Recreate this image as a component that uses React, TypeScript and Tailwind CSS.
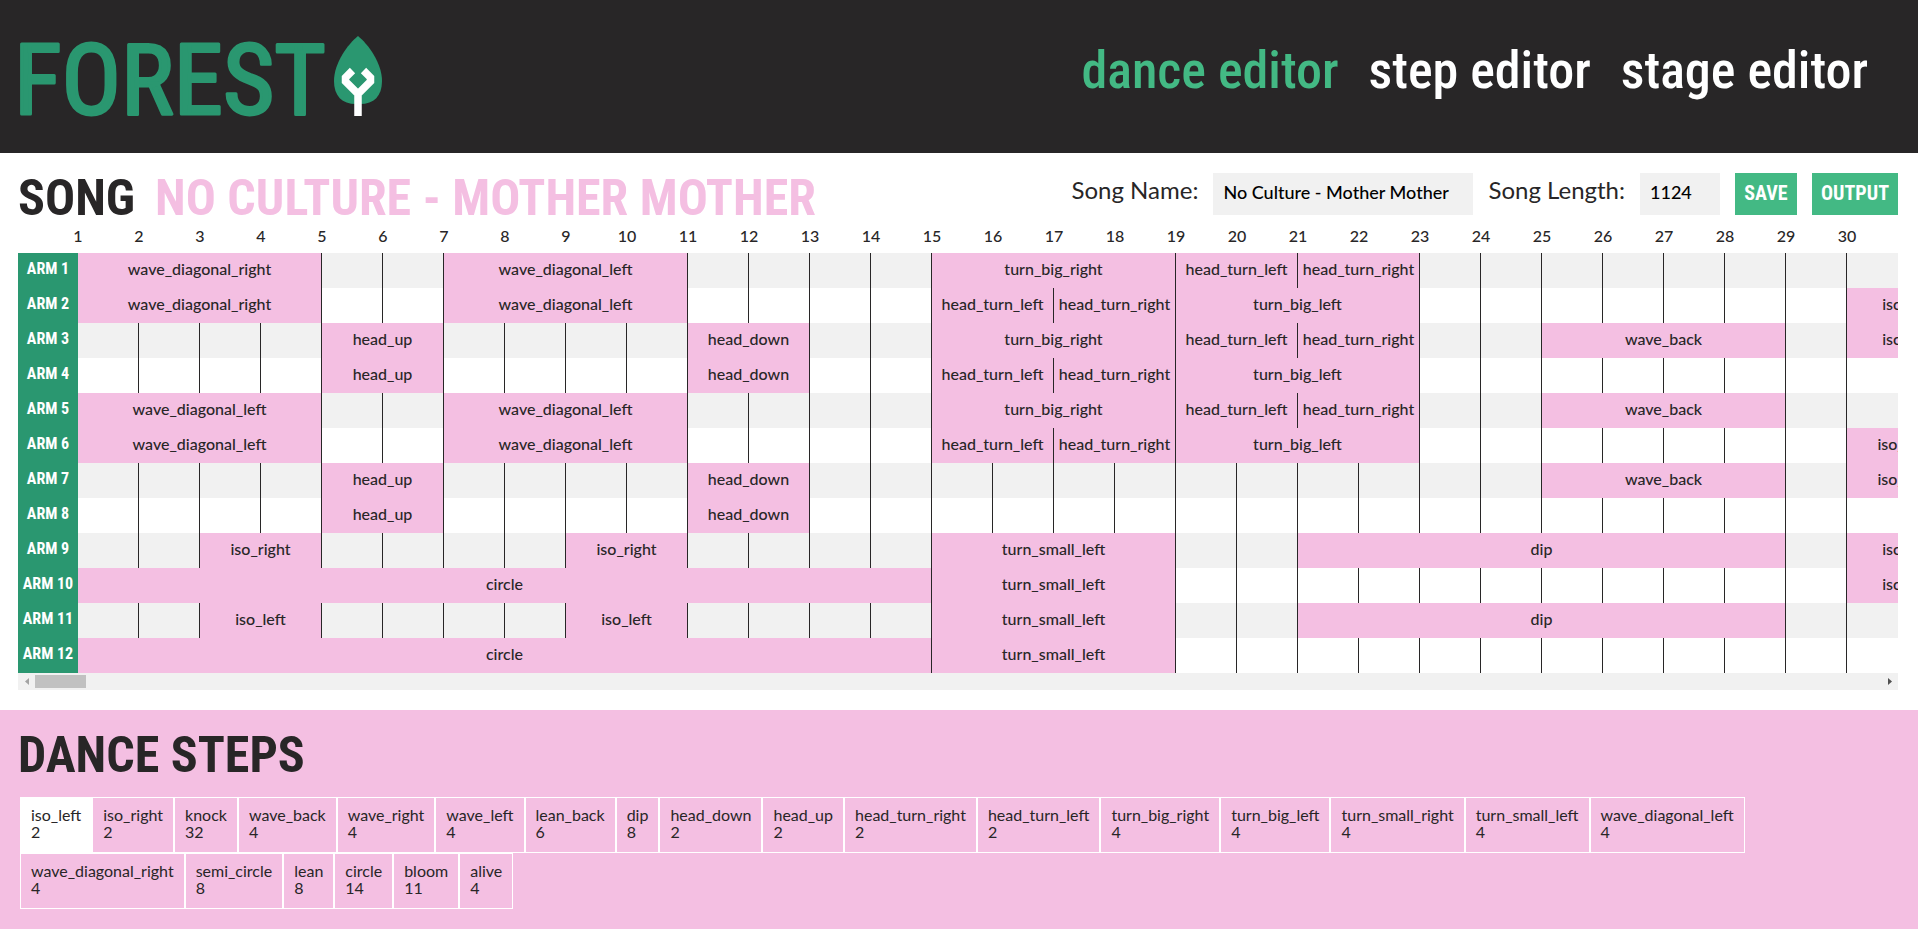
import { useState } from "react";

type Block = [start: number, span: number, name: string];

const BEATS = 31;

const headsUpDown: Block[] = [[5, 2, "head_up"], [11, 2, "head_down"]];
const turnBig: Block[] = [[15, 4, "turn_big_right"], [19, 2, "head_turn_left"], [21, 2, "head_turn_right"]];
const turnHead: Block[] = [[15, 2, "head_turn_left"], [17, 2, "head_turn_right"], [19, 4, "turn_big_left"]];
const waveBack: Block = [25, 4, "wave_back"];
const turnSmall: Block = [15, 4, "turn_small_left"];
const dip: Block = [21, 8, "dip"];
const isoLeft: Block = [30, 2, "iso_left"];
const isoRight: Block = [30, 2, "iso_right"];

const arms: Block[][] = [
  [[1, 4, "wave_diagonal_right"], [7, 4, "wave_diagonal_left"], ...turnBig],
  [[1, 4, "wave_diagonal_right"], [7, 4, "wave_diagonal_left"], ...turnHead, isoLeft],
  [...headsUpDown, ...turnBig, waveBack, isoLeft],
  [...headsUpDown, ...turnHead],
  [[1, 4, "wave_diagonal_left"], [7, 4, "wave_diagonal_left"], ...turnBig, waveBack],
  [[1, 4, "wave_diagonal_left"], [7, 4, "wave_diagonal_left"], ...turnHead, isoRight],
  [...headsUpDown, waveBack, isoRight],
  [...headsUpDown],
  [[3, 2, "iso_right"], [9, 2, "iso_right"], turnSmall, dip, isoLeft],
  [[1, 14, "circle"], turnSmall, isoLeft],
  [[3, 2, "iso_left"], [9, 2, "iso_left"], turnSmall, dip],
  [[1, 14, "circle"], turnSmall],
];

const steps: [string, number][] = [
  ["iso_left", 2], ["iso_right", 2], ["knock", 32], ["wave_back", 4], ["wave_right", 4], ["wave_left", 4],
  ["lean_back", 6], ["dip", 8], ["head_down", 2], ["head_up", 2], ["head_turn_right", 2], ["head_turn_left", 2],
  ["turn_big_right", 4], ["turn_big_left", 4], ["turn_small_right", 4], ["turn_small_left", 4],
  ["wave_diagonal_left", 4], ["wave_diagonal_right", 4], ["semi_circle", 8], ["lean", 8], ["circle", 14],
  ["bloom", 11], ["alive", 4],
];

function Logo() {
  return (
    <svg viewBox="0 0 368 84" className="h-[84px] w-[368px]" role="img" aria-label="Forest">
      <text
        x="-4"
        y="78"
        className="fill-[#2a9770] stroke-[#2a9770] font-['Roboto_Condensed',sans-serif] text-[99px] font-normal"
        strokeWidth="3"
        strokeLinejoin="round"
      >
        FOREST
      </text>
      <path
        d="M340 0C350 8 364 27 364 45C364 60 356 68 342 68H338C324 68 316 60 316 45C316 27 330 8 340 0Z"
        fill="#2a9770"
      />
      <path
        d="M334.500 34.500L327.500 41.500V45.500L340 58L352.500 45.500V41.500L345.500 34.500M340 56V80"
        fill="none"
        stroke="#fff"
        strokeWidth="7.500"
      />
    </svg>
  );
}

function ArmRow({ index, blocks }: { index: number; blocks: Block[] }) {
  const cells = [];
  let beat = 1;
  while (beat <= BEATS) {
    const block = blocks.find((b) => b[0] === beat);
    if (block) {
      cells.push(
        <td key={beat} colSpan={block[1]} className="border-r border-[#282627] bg-[#f4bfe2] p-0 pb-1 text-center">
          {block[2]}
        </td>,
      );
      beat += block[1];
    } else {
      cells.push(<td key={beat} className="border-r border-[#282627] p-0" />);
      beat += 1;
    }
  }
  return (
    <tr className="h-[35px] odd:bg-[#f1f1f1]">
      <th scope="row" className="bg-[#2a9770] p-0 pb-1 text-center font-['Roboto_Condensed',sans-serif] font-bold text-white">
        ARM {index}
      </th>
      {cells}
    </tr>
  );
}

function ScrollBar() {
  return (
    <div className="flex h-[17px] items-center justify-between bg-[#f1f1f1]">
      <div className="flex items-center">
        <button aria-label="Scroll left" className="flex h-[17px] w-[17px] items-center justify-center">
          <svg viewBox="0 0 4 7" className="h-[7px] w-1" fill="#a3a3a3"><path d="M4 0V7L0 3.500Z" /></svg>
        </button>
        <div className="h-[13px] w-[51px] bg-[#c1c1c1]" />
      </div>
      <button aria-label="Scroll right" className="flex h-[17px] w-[17px] items-center justify-center">
        <svg viewBox="0 0 4 7" className="h-[7px] w-1" fill="#505050"><path d="M0 0V7L4 3.500Z" /></svg>
      </button>
    </div>
  );
}

export default function App() {
  const [selected, setSelected] = useState("iso_left");
  const [song, setSong] = useState("No Culture - Mother Mother");
  const [length, setLength] = useState("1124");

  return (
    <div className="flex min-h-screen flex-col bg-white font-['Lato',sans-serif] text-base font-medium text-[#282627]">
      <header className="flex h-[153px] items-center justify-between bg-[#282627] pr-[50px] pl-[18px]">
        <div className="pt-[3px]">
          <Logo />
        </div>
        <nav className="flex gap-[30px] pb-3 font-['Roboto_Condensed',sans-serif] text-[52px] leading-[60px] font-medium text-white">
          <a href="#dance" className="text-[#43b984]">dance editor</a>
          <a href="#step">step editor</a>
          <a href="#stage">stage editor</a>
        </nav>
      </header>

      <main className="pt-5 pr-5 pb-5 pl-[18px]">
        <div className="flex items-start justify-between">
          <h1 className="flex gap-5 font-['Roboto_Condensed',sans-serif] text-[50px] leading-[50px] font-bold">
            SONG
            <span className="text-[#f4bfe2]">NO CULTURE - MOTHER MOTHER</span>
          </h1>
          <form className="flex h-[42px] items-stretch gap-[15px]" onSubmit={(e) => e.preventDefault()}>
            <label htmlFor="song-name" className="text-[24px] leading-[34px] font-normal">Song Name:</label>
            <input
              id="song-name"
              value={song}
              onChange={(e) => setSong(e.target.value)}
              className="w-[260px] bg-[#f1f1f1] px-[10px] pb-1 text-[18px] text-black"
            />
            <label htmlFor="song-length" className="text-[24px] leading-[34px] font-normal">Song Length:</label>
            <input
              id="song-length"
              value={length}
              onChange={(e) => setLength(e.target.value)}
              className="w-20 bg-[#f1f1f1] px-[10px] pb-1 text-[18px] text-black"
            />
            <button className="w-[62px] bg-[#43b984] pb-0.5 font-['Roboto_Condensed',sans-serif] text-[20px] font-bold text-white">SAVE</button>
            <button className="w-[86px] bg-[#43b984] pb-0.5 font-['Roboto_Condensed',sans-serif] text-[20px] font-bold text-white">OUTPUT</button>
          </form>
        </div>

        <div className="overflow-hidden">
          <table className="w-[1951px] table-fixed border-separate border-spacing-0">
            <colgroup>
              <col className="w-[60px]" />
              {Array.from({ length: BEATS }, (_, i) => <col key={i} className="w-[61px]" />)}
            </colgroup>
            <thead>
              <tr className="h-[30px]">
                <td className="p-0" />
                {Array.from({ length: BEATS }, (_, i) => (
                  <th key={i} scope="col" className="p-0 pb-1 text-center leading-6 font-medium">
                    <span className="block -translate-x-1/2">{i + 1}</span>
                  </th>
                ))}
              </tr>
            </thead>
            <tbody>
              {arms.map((blocks, i) => <ArmRow key={i} index={i + 1} blocks={blocks} />)}
            </tbody>
          </table>
        </div>
        <ScrollBar />
      </main>

      <section className="grow bg-[#f4bfe2] py-5 pr-5 pl-[18px]">
        <h2 className="font-['Roboto_Condensed',sans-serif] text-[50px] leading-[50px] font-bold">DANCE STEPS</h2>
        <div className="mt-[17px] flex flex-wrap pl-0.5 font-normal">
          {steps.map(([name, beats]) => (
            <button
              key={name}
              onClick={() => setSelected(name)}
              className={
                selected === name
                  ? "border border-white bg-white px-[10px] pt-2 pb-3 text-left leading-[17px]"
                  : "border border-white px-[10px] pt-2 pb-3 text-left leading-[17px]"
              }
            >
              <span className="block">{name}</span>
              <span className="block">{beats}</span>
            </button>
          ))}
        </div>
      </section>
    </div>
  );
}
